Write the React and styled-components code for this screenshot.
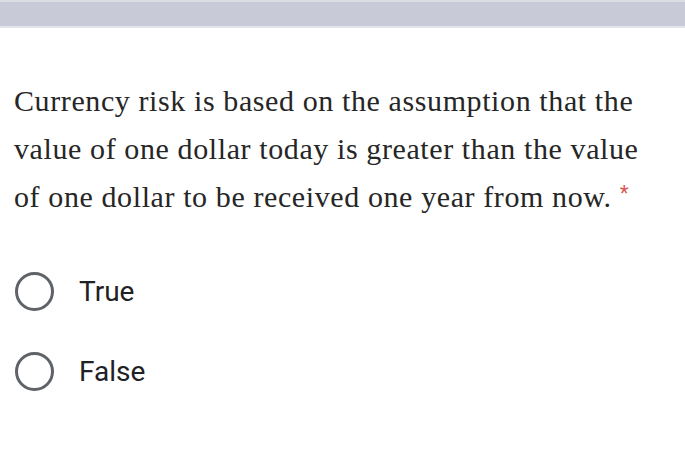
import React from "react";
import styled, { createGlobalStyle } from "styled-components";

const Global = createGlobalStyle`
  html, body { margin: 0; padding: 0; background: #ffffff; }
  body { width: 685px; height: 449px; overflow: hidden; }
`;

const Page = styled.div`
  width: 685px;
  height: 449px;
  background: #fff;
  display: flex;
  flex-direction: column;
`;

const TopBar = styled.div`
  height: 24px;
  flex-shrink: 0;
  background: #c8cad8;
  border-top: 2px solid #dcdde3;
  border-bottom: 2px solid #e4e5ea;
`;

const Question = styled.p`
  margin: 49px 0 0 14px;
  font-family: "Liberation Serif", "DejaVu Serif", serif;
  font-size: 30px;
  letter-spacing: 0.6px;
  line-height: 48px;
  color: #262626;
  white-space: nowrap;
`;

const Star = styled.span`
  color: #d9534f;
  font-family: "Liberation Sans", sans-serif;
  font-size: 23px;
  line-height: 0;
  margin-left: 8px;
  vertical-align: 5px;
`;

const Options = styled.div`
  display: flex;
  flex-direction: column;
  gap: 40px;
  margin: 50px 0 0 15px;
`;

const Option = styled.label`
  display: flex;
  align-items: center;
  gap: 25px;
  height: 40px;
`;

const Radio = styled.span`
  box-sizing: border-box;
  width: 39px;
  height: 39px;
  border: 3.5px solid #5f6368;
  border-radius: 50%;
`;

const Label = styled.span`
  font-family: Roboto, "Liberation Sans", sans-serif;
  font-size: 28px;
  color: #202124;
`;

export default function App() {
  return (
    <Page>
      <Global />
      <TopBar />
      <Question>
        Currency risk is based on the assumption that the
        <br />
        value of one dollar today is greater than the value
        <br />
        of one dollar to be received one year from now.
        <Star>*</Star>
      </Question>
      <Options>
        <Option><Radio /><Label>True</Label></Option>
        <Option><Radio /><Label>False</Label></Option>
      </Options>
    </Page>
  );
}
